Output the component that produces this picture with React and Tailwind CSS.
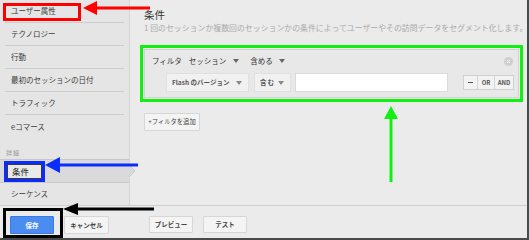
import React from "react";

function Caret({ color = "#777" }) {
  return (
    <svg width="6" height="4" viewBox="0 0 6 4" className="shrink-0">
      <path d="M0 0h6L3 4z" fill={color} />
    </svg>
  );
}

const items = ["ユーザー属性", "テクノロジー", "行動", "最初のセッションの日付", "トラフィック", "eコマース"];

export default function App() {
  return (
    <div className="relative w-[529px] h-[240px] overflow-hidden bg-[#ebebeb] border-r-2 border-b-2 border-[#4a4a4a] flex flex-col font-['Noto_Sans_CJK_JP','Noto_Sans',sans-serif] text-[#333]">
      <div className="flex h-[205px]">
        {/* Sidebar */}
        <aside className="w-[130px] shrink-0 bg-[#e5e5e5] border-r border-[#d4d4d4] flex flex-col">
          <div className="px-[5px]">
            {items.map((t, i) => (
              <div
                key={t}
                className={`h-[23px] flex items-center pl-[6px] text-[7.5px] leading-none text-[#3a3a3a] ${i < items.length - 1 ? "border-b border-[#cdcdcd]" : ""}`}
              >
                {t}
              </div>
            ))}
          </div>
          <div className="h-[21px] flex items-end pl-[6px] pb-[3px] text-[6px] leading-none text-[#999] tracking-[1px]">詳細</div>
          <div className="relative h-[24px] bg-[#dadada] border-y border-[#c8c8c8] flex items-center pl-[4px]">
            <span className="h-[21px] w-[41px] border-[3px] border-[#0a2cff] shadow-[inset_0_0_0_1px_#3a3a3a] bg-[#e9e9e9] flex items-center pl-[5px] text-[8.5px] leading-none text-[#222]">
              条件
            </span>
            <svg width="7" height="12" viewBox="0 0 7 12" className="absolute right-[-7px] top-[5px]">
              <path d="M0 0L6 6L0 12z" fill="#dadada" />
              <path d="M0 0L6 6L0 12" fill="none" stroke="#c8c8c8" strokeWidth="1" />
            </svg>
          </div>
          <div className="px-[5px]">
            <div className="h-[21px] flex items-center pl-[6px] text-[7.5px] leading-none text-[#3a3a3a]">シーケンス</div>
          </div>
        </aside>

        {/* Main */}
        <main className="flex-1 pl-[14px] pt-[8px] min-w-0">
          <div className="text-[10.5px] leading-[14px] text-[#333]">条件</div>
          <div className="text-[7.9px] leading-[12px] text-[#aaa] whitespace-nowrap">
            1 回のセッションか複数回のセッションかの条件によってユーザーやその訪問データをセグメント化します。
          </div>

          <div className="mt-[15px] w-[375px] h-[49px] border border-[#d2d2d2] bg-[#e8e8e8] pl-[7px] pr-[4px] pt-[5px]">
            <div className="h-[12px] flex items-center text-[7.5px] leading-none text-[#333]">
              <span>フィルタ</span>
              <span className="ml-[7px]">セッション</span>
              <span className="ml-[7px]"><Caret color="#666" /></span>
              <span className="ml-[11px]">含める</span>
              <span className="ml-[6px]"><Caret color="#666" /></span>
              <span className="ml-auto mr-[1px] w-[9px] h-[9px] rounded-full bg-[#cfcfcf] flex items-center justify-center">
                <svg width="5" height="5" viewBox="0 0 5 5">
                  <path d="M1 1L4 4M4 1L1 4" stroke="#f2f2f2" strokeWidth="1" />
                </svg>
              </span>
            </div>
            <div className="mt-[6px] h-[19px] flex items-center pl-[14px]">
              <div className="h-[19px] w-[83px] bg-[#f1f1f1] border border-[#e0e0e0] flex items-center pl-[5px] pr-[6px] text-[6.5px] font-bold leading-none text-[#555]">
                <span>Flash のバージョン</span>
                <span className="ml-auto"><Caret color="#888" /></span>
              </div>
              <div className="ml-[5px] h-[19px] w-[37px] bg-[#f1f1f1] border border-[#e0e0e0] flex items-center pl-[5px] pr-[6px] text-[6.5px] font-bold leading-none text-[#555]">
                <span className="tracking-[1px]">含む</span>
                <span className="ml-auto"><Caret color="#888" /></span>
              </div>
              <div className="ml-[4px] h-[19px] w-[153px] bg-white border border-[#dadada]" />
              <div className="ml-auto flex h-[15px] border border-[#d0d0d0] bg-[#f3f3f3] text-[6px] font-bold leading-none text-[#555]">
                <div className="w-[14px] flex items-center justify-center border-r border-[#d6d6d6]">
                  <span className="block w-[5px] h-[1.5px] bg-[#555]" />
                </div>
                <div className="w-[17px] flex items-center justify-center border-r border-[#d6d6d6]">OR</div>
                <div className="w-[18px] flex items-center justify-center">AND</div>
              </div>
            </div>
          </div>

          <button className="mt-[15px] h-[18px] w-[56px] bg-[#f4f4f4] border border-[#d6d6d6] rounded-[1px] text-[6.3px] leading-none text-[#444] flex items-center justify-center">
            +フィルタを追加
          </button>
        </main>
      </div>

      {/* Footer */}
      <footer className="h-[33px] border-t border-[#cfcfcf] bg-[#ebebeb] pt-[10px] pl-[10px] flex items-start">
        <button className="h-[18px] w-[44px] bg-[#4a8cf0] border border-[#3c7ae0] rounded-[1px] text-[6.5px] font-bold leading-none text-white flex items-center justify-center">
          保存
        </button>
        <button className="ml-[10px] h-[18px] w-[45px] bg-[#f4f4f4] border border-[#d6d6d6] rounded-[1px] text-[6.5px] font-bold leading-none text-[#444] flex items-center justify-center">
          キャンセル
        </button>
        <button className="ml-[40px] h-[17px] w-[44px] bg-[#f4f4f4] border border-[#d6d6d6] rounded-[1px] text-[6.5px] font-bold leading-none text-[#444] flex items-center justify-center">
          プレビュー
        </button>
        <button className="ml-[10px] h-[17px] w-[44px] bg-[#f4f4f4] border border-[#d6d6d6] rounded-[1px] text-[6.5px] font-bold leading-none text-[#444] flex items-center justify-center">
          テスト
        </button>
      </footer>

      {/* Annotation overlays */}
      <div className="absolute left-[3px] top-[3px] w-[78px] h-[18px] border-[3px] border-[#ff0000] pointer-events-none" />
      <div className="absolute left-[140px] top-[45px] w-[383px] h-[57px] border-[3px] border-[#11f011] pointer-events-none" />
      <div className="absolute left-[3px] top-[208px] w-[60px] h-[30px] border-[3px] border-black pointer-events-none" />
      <svg className="absolute left-0 top-0 pointer-events-none" width="529" height="240" viewBox="0 0 529 240">
        <path d="M83 8L97 1L97 15z" fill="#ff0000" />
        <line x1="96" y1="8" x2="150" y2="8" stroke="#ff0000" strokeWidth="3" />
        <path d="M45 165L60 157L60 173z" fill="#0a2cff" />
        <line x1="59" y1="165" x2="138" y2="165" stroke="#0a2cff" strokeWidth="3" />
        <path d="M63 209L78 203L78 215z" fill="#000" />
        <line x1="77" y1="209" x2="154" y2="209" stroke="#000" strokeWidth="3" />
        <path d="M391 106L384 119L398 119z" fill="#11f011" />
        <line x1="391" y1="118" x2="391" y2="182" stroke="#11f011" strokeWidth="3" />
      </svg>
    </div>
  );
}
